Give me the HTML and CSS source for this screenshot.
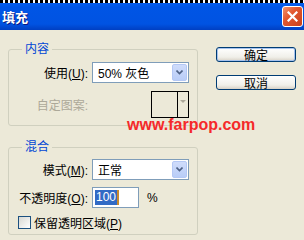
FILE: index.html
```html
<!DOCTYPE html>
<html lang="zh-CN">
  <head>
    <meta charset="UTF-8" />
    <title>填充</title>
    <link rel="stylesheet" href="styles.css">
  </head>
  <body>
    <div class="titlebar">
      <div class="ants"></div>
      <div class="title-row">
        <span class="title">填充</span>
        <span class="close">
          <svg width="11" height="11" viewBox="0 0 11 11">
            <path d="M1.5 1.5 L9.5 9.5 M9.5 1.5 L1.5 9.5" stroke="#fff" stroke-width="2.2" stroke-linecap="square" />
          </svg>
        </span>
      </div>
    </div>

    <div class="dialog">
      <div class="groups">
        <fieldset class="group">
          <legend>内容</legend>
          <div class="grid grid-content">
            <label class="lbl">使用(<u>U</u>):</label>
            <div class="select">
              <span>50% 灰色</span>
              <span class="drop">
                <svg width="7" height="5" viewBox="0 0 7 5"><path d="M0.5 0.5 L3.5 3.5 L6.5 0.5" stroke="#4d6185" stroke-width="1.6" fill="none" /></svg>
              </span>
            </div>
            <label class="lbl disabled">自定图案:</label>
            <div class="pattern">
              <span class="pattern-swatch"></span>
              <span class="pattern-arrow"><span class="tri"></span></span>
            </div>
          </div>
        </fieldset>

        <fieldset class="group group-blend">
          <legend>混合</legend>
          <div class="grid grid-blend">
            <label class="lbl">模式(<u>M</u>):</label>
            <div class="select">
              <span>正常</span>
              <span class="drop">
                <svg width="7" height="5" viewBox="0 0 7 5"><path d="M0.5 0.5 L3.5 3.5 L6.5 0.5" stroke="#4d6185" stroke-width="1.6" fill="none" /></svg>
              </span>
            </div>
            <label class="lbl">不透明度(<u>O</u>):</label>
            <div class="opacity">
              <div class="field"><span class="sel">100</span><span class="caret"></span></div>
              <span>%</span>
            </div>
            <div class="check-row">
              <span class="checkbox"></span>
              <span>保留透明区域(<u>P</u>)</span>
            </div>
          </div>
        </fieldset>
      </div>

      <div class="buttons">
        <button class="btn btn-default">确定</button>
        <button class="btn">取消</button>
      </div>

      <div class="watermark">www.farpop.com</div>
    </div>
  </body>
</html>
```

FILE: styles.css
```css
body {
  margin: 0;
  width: 304px;
  height: 240px;
  overflow: hidden;
  background: #ece9d8;
  font-family: "Liberation Sans", "Noto Sans CJK SC", sans-serif;
  font-size: 12px;
  color: #000;
}

/* 타이틀바 */
.titlebar {
  height: 30px;
  display: flex;
  flex-direction: column;
  background: linear-gradient(#0a63f0, #0055e5 25%, #0053e2 80%, #003fc2);
}

.ants {
  height: 3px;
  background: repeating-linear-gradient(90deg, #000 0 3px, #fff 3px 5px);
}

.title-row {
  flex: 1;
  display: flex;
  align-items: center;
  justify-content: space-between;
  padding: 0 1px 0 2px;
}

.title {
  color: #fff;
  font-family: "Noto Sans CJK SC", sans-serif;
  font-size: 13px;
  font-weight: 700;
  text-shadow: 1px 1px 0 #0a1883;
}

.close {
  width: 19px;
  height: 19px;
  border: 1px solid #fff;
  border-radius: 3px;
  background: linear-gradient(135deg, #f0926e, #e2572f 40%, #c9401c);
  display: flex;
  justify-content: center;
  align-items: center;
}

/* 본문 */
.dialog {
  position: relative;
  display: flex;
  height: 210px;
}

.groups {
  width: 190px;
  padding: 12px 0 0 8px;
}

.group {
  margin: 0;
  min-width: 0;
  border: 1px solid #d0d0bf;
  border-radius: 3px;
  padding: 6px 8px 7px 9px;
}

.group-blend {
  margin-top: 14px;
  padding-top: 5px;
  padding-bottom: 5px;
}

legend {
  color: #0046d5;
  font-size: 12px;
  line-height: 14px;
  padding: 0 3px;
  margin-left: 4px;
}

.grid {
  display: grid;
  grid-template-columns: 70px 97px;
  column-gap: 4px;
  align-items: center;
}

.grid-content {
  grid-template-rows: 21px 27px;
  row-gap: 8px;
}

.grid-blend {
  grid-template-rows: 21px 21px 14px;
  row-gap: 7px;
}

.lbl {
  text-align: right;
  white-space: nowrap;
}

.disabled {
  color: #aca899;
}

.select {
  height: 21px;
  box-sizing: border-box;
  border: 1px solid #7f9db9;
  background: #fff;
  display: flex;
  align-items: center;
  padding-left: 5px;
}

.drop {
  margin-left: auto;
  margin-right: 1px;
  width: 15px;
  height: 17px;
  box-sizing: border-box;
  border: 1px solid #b4c8f5;
  border-radius: 2px;
  background: linear-gradient(#cfdcfb, #b9cdf7);
  display: flex;
  justify-content: center;
  align-items: center;
}

.pattern {
  justify-self: end;
  width: 38px;
  height: 27px;
  box-sizing: border-box;
  border: 1px solid #000;
  display: flex;
}

.pattern-swatch {
  flex: 1;
  border-right: 1px solid #000;
}

.pattern-arrow {
  width: 10px;
  display: flex;
  justify-content: center;
  padding-top: 8px;
}

.tri {
  width: 0;
  height: 0;
  border-left: 3px solid transparent;
  border-right: 3px solid transparent;
  border-top: 3px solid #aca899;
}

.opacity {
  display: flex;
  align-items: center;
  gap: 8px;
}

.field {
  width: 47px;
  height: 21px;
  box-sizing: border-box;
  border: 1px solid #7f9db9;
  background: #fff;
  display: flex;
  align-items: center;
  padding-left: 2px;
}

.sel {
  background: #316ac5;
  color: #fff;
  line-height: 15px;
  padding: 0 1px;
}

.caret {
  width: 2px;
  height: 15px;
  background: #c98a2c;
}

.check-row {
  grid-column: 1 / 3;
  display: flex;
  align-items: center;
  gap: 3px;
}

.checkbox {
  width: 13px;
  height: 13px;
  box-sizing: border-box;
  border: 1px solid #1c5180;
  background: linear-gradient(135deg, #d8d8d2, #fff);
}

/* 버튼 */
.buttons {
  margin-left: 18px;
  padding-top: 17px;
  display: flex;
  flex-direction: column;
  gap: 13px;
}

.btn {
  width: 80px;
  height: 15px;
  box-sizing: border-box;
  padding: 0;
  border: 1px solid #003c74;
  border-radius: 3px;
  background: linear-gradient(#fff, #f0efe9 70%, #d8d2c6);
  font-family: "Noto Sans CJK SC", sans-serif;
  font-size: 12px;
  line-height: 13px;
  color: #000;
}

.btn-default {
  box-shadow: inset 0 0 0 1px #a6c3ee;
}

.watermark {
  position: absolute;
  left: 127px;
  top: 86px;
  color: #f52a2a;
  font-family: "Liberation Sans", sans-serif;
  font-size: 16px;
  font-weight: 700;
}
```
